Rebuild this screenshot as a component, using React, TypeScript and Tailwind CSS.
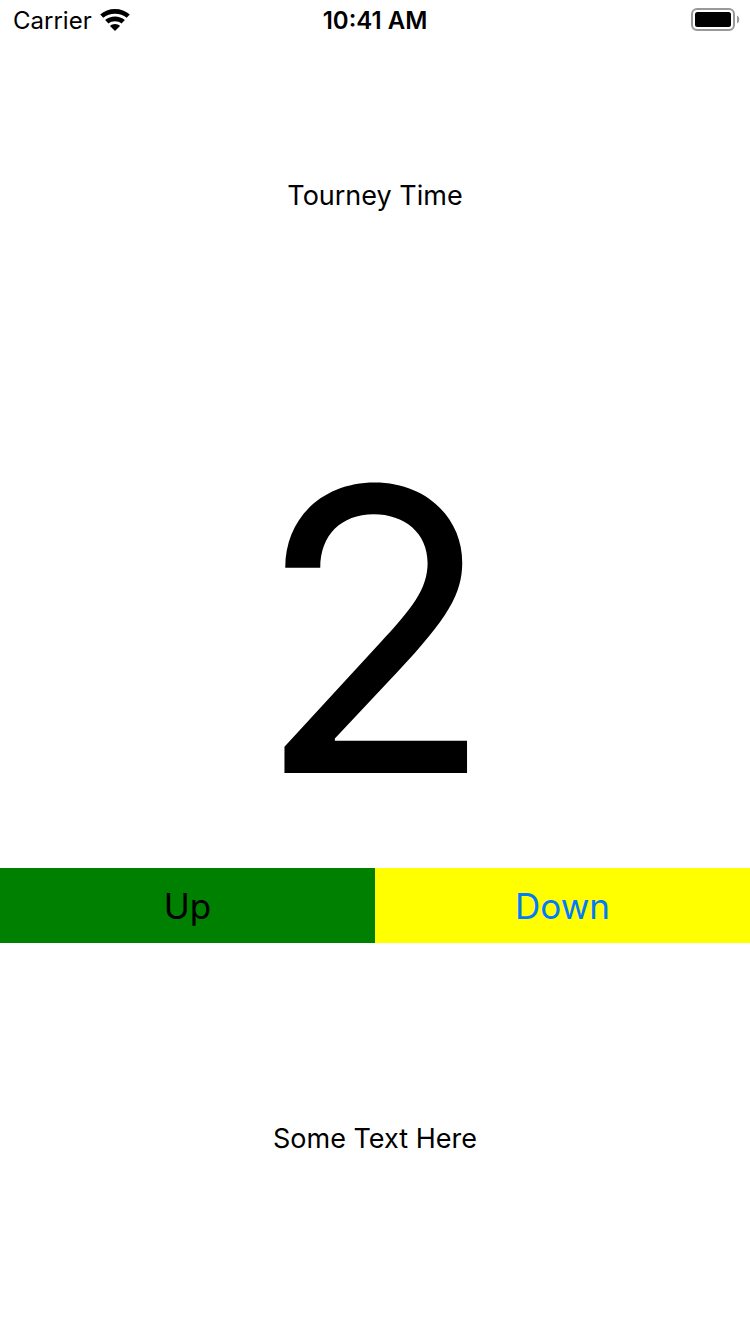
import { useState } from "react";

function WifiIcon() {
  return (
    <svg viewBox="0 -1 30 24" className="h-6 w-[30px]" fill="currentColor" aria-hidden="true">
      <path d="M15 0C9.300 0 4.100 2 0.200 5.500L3.300 8.700C6.500 6.100 10.500 4.800 15 4.800S23.500 6.100 26.700 8.700L29.800 5.500C25.900 2 20.700 0 15 0Z" />
      <path d="M15 7.500C11.300 7.500 7.800 8.800 5.100 11.100L8.500 14.600C10.300 13.100 12.500 12.300 15 12.300S19.700 13.100 21.500 14.600L24.900 11.100C22.200 8.800 18.700 7.500 15 7.500Z" />
      <path d="M15 15C13.100 15 11.400 15.700 10 16.900L15 22L20 16.900C18.600 15.700 16.900 15 15 15Z" />
    </svg>
  );
}

function BatteryIcon() {
  return (
    <svg viewBox="0 0 49 23" className="h-[23px] w-[49px]" aria-hidden="true">
      <rect x="1" y="1" width="42" height="21" rx="5" fill="none" stroke="#999" strokeWidth="2" />
      <rect x="4" y="4" width="36" height="15" rx="2.500" fill="#000" />
      <path d="M46 7.500C47.600 8.200 48.200 9.700 48.200 11.500S47.600 14.800 46 15.500Z" fill="#999" />
    </svg>
  );
}

export default function App() {
  const [count, setCount] = useState(2);

  return (
    <div className="flex min-h-screen flex-col bg-white font-['Inter',sans-serif] text-black">
      <header className="grid h-10 grid-cols-3 items-start px-[10px] pt-2 text-2xl leading-[26px]">
        <div className="flex items-start gap-2 pl-[3px]">
          <span>Carrier</span>
          <WifiIcon />
        </div>
        <time className="text-center font-semibold">10:41 AM</time>
        <div className="flex justify-end">
          <BatteryIcon />
        </div>
      </header>
      <main className="flex flex-1 flex-col">
        <h1 className="flex h-[312px] items-center justify-center text-[27px]">Tourney Time</h1>
        <output className="flex flex-1 items-center justify-center pt-10 text-[394px] leading-none">{count}</output>
        <div className="grid h-[75px] grid-cols-2 text-[35px]">
          <button type="button" className="bg-[#008000] pt-0.5" onClick={() => setCount(count + 1)}>
            Up
          </button>
          <button type="button" className="bg-[#ffff00] pt-0.5 text-[#007aff]" onClick={() => setCount(count - 1)}>
            Down
          </button>
        </div>
        <p className="flex h-[391px] items-center justify-center pt-0.5 text-[27px]">Some Text Here</p>
      </main>
    </div>
  );
}
